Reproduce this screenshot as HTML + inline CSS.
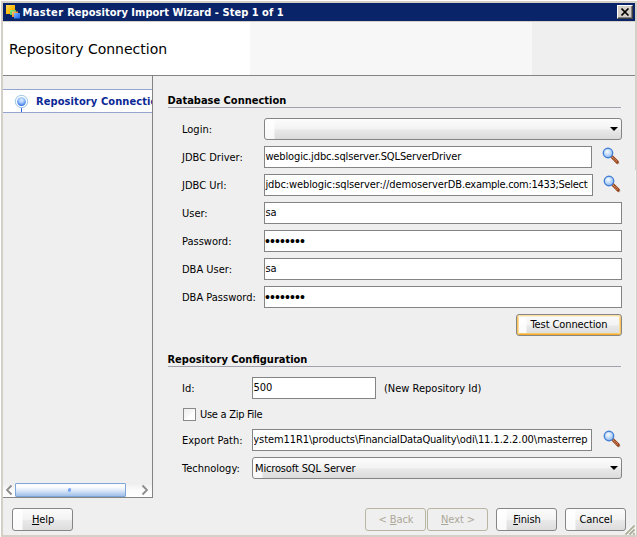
<!DOCTYPE html>
<html>
<head>
<meta charset="utf-8">
<title>Master Repository Import Wizard - Step 1 of 1</title>
<style>
html,body{margin:0;padding:0;}
body{width:637px;height:537px;overflow:hidden;background:#D4D0C8;position:relative;
 font-family:"DejaVu Sans Condensed","Liberation Sans",sans-serif;font-size:11px;color:#000;}
.abs{position:absolute;}
#win{position:absolute;left:0;top:0;width:637px;height:537px;background:#D4D0C8;overflow:hidden;}
#edgeL{left:0;top:0;width:1px;height:537px;background:#fff;}
#edgeT{left:0;top:0;width:637px;height:1px;background:#fff;}
#title{left:3px;top:3px;width:632px;height:18px;background:#0A246A;}
#title .t{left:19.5px;top:3px;letter-spacing:0.03px;color:#fff;font-weight:bold;white-space:pre;line-height:13px;}
#closeb{left:614px;top:2px;width:16px;height:14px;background:#D4D0C8;box-sizing:border-box;
 border-top:1px solid #fff;border-left:1px solid #fff;border-right:1px solid #404040;border-bottom:1px solid #404040;}
#closeb:after{content:"";position:absolute;left:0;top:0;right:0;bottom:0;border-right:1px solid #808080;border-bottom:1px solid #808080;}
#content{left:3px;top:22px;width:632px;height:513px;background:#EFEFEF;}
#hdrW{left:0;top:0;width:247px;height:53px;background:#fff;}
#hdrG{left:247px;top:0;width:282px;height:53px;background:#F7F7F7;}
#hdrLine{left:0;top:53px;width:632px;height:1px;background:#848484;}
#hdrTxt{left:6px;top:18px;font-family:"DejaVu Sans","Liberation Sans",sans-serif;font-size:14px;line-height:18px;white-space:pre;}
#vline{left:149px;top:54px;width:1px;height:422px;background:#848484;}
#navband{left:0;top:67px;width:149px;height:22px;background:#fff;border-top:1px solid #94A6CE;border-bottom:1px solid #94A6CE;overflow:hidden;}
#navtxt{left:33px;top:5px;font-weight:bold;color:#0A2896;letter-spacing:0.1px;white-space:pre;line-height:13px;}
.lbl{position:absolute;white-space:pre;line-height:13px;}
.sec{position:absolute;font-weight:bold;white-space:pre;line-height:13px;}
.sline{position:absolute;height:1px;background:#A2A2AE;border-right:1px solid #FBFBFB;}
.tf{position:absolute;box-sizing:border-box;height:22px;background:#fff;border:1px solid #848484;overflow:hidden;white-space:pre;line-height:20px;padding-left:0.4px;}
.tf.pw{font-family:"Liberation Sans",sans-serif;font-size:14px;letter-spacing:0.1px;padding-left:0;}
.combo{position:absolute;box-sizing:border-box;height:22px;border:1px solid #848484;border-radius:3px;background:linear-gradient(to right,rgba(255,255,255,.8) 0,rgba(255,255,255,.8) 9px,rgba(255,255,255,0) 10px),linear-gradient(#FCFCFC 0%,#F3F3F3 50%,#E9E9E9 54%,#DBDBDB 100%);white-space:pre;line-height:22px;padding-left:4px;}
.combo:after{content:"";position:absolute;right:3px;top:8px;border-left:4px solid transparent;border-right:4px solid transparent;border-top:4px solid #000;}
.btn{position:absolute;box-sizing:border-box;height:23px;border:1px solid #868686;border-radius:3px;padding-left:1px;
 background:linear-gradient(to right,rgba(255,255,255,.85) 0,rgba(255,255,255,.85) 9px,rgba(255,255,255,0) 10px),linear-gradient(#FBFBFB 0%,#F3F3F3 50%,#E9E9E9 54%,#DDDDDD 100%);
 text-align:center;line-height:22px;white-space:pre;letter-spacing:-0.1px;}
.btn.dis{color:#ACA899;border-color:#B8B6A2;background:#EFEFEF;}
.btn.foc{height:22px;line-height:20px;padding-left:0;box-shadow:inset 0 1px 0 0 #FBDFA4,inset 1px 0 0 0 #F9C460,inset -1px 0 0 0 #F9C460,inset 0 -1px 0 0 #F2AC34,inset 0 2px 0 0 #FDF0D0,inset 2px 0 0 0 #FCDC98,inset -2px 0 0 0 #FCDC98,inset 0 -2px 0 0 #F8C868;}
u{text-decoration:underline;}
</style>
</head>
<body>
<div id="win">
 <div class="abs" id="edgeT"></div><div class="abs" id="edgeL"></div>
 <div class="abs" style="left:635px;top:170px;width:1px;height:365px;background:#F4F4F2"></div>
 <div class="abs" id="title">
  <svg class="abs" style="left:2px;top:1px" width="16" height="16" viewBox="0 0 16 16">
   <defs>
    <linearGradient id="go" x1="0" y1="0" x2="1" y2="1"><stop offset="0" stop-color="#FFD860"/><stop offset="0.5" stop-color="#FFC010"/><stop offset="1" stop-color="#FF9800"/></linearGradient>
    <linearGradient id="gg" x1="0" y1="0" x2="1" y2="1"><stop offset="0" stop-color="#90F080"/><stop offset="1" stop-color="#30B030"/></linearGradient>
    <linearGradient id="gr" x1="0" y1="0" x2="1" y2="1"><stop offset="0" stop-color="#FFC890"/><stop offset="0.5" stop-color="#F89030"/><stop offset="1" stop-color="#F07810"/></linearGradient>
    <linearGradient id="gb" x1="0" y1="0" x2="1" y2="1"><stop offset="0" stop-color="#80B8FF"/><stop offset="1" stop-color="#1060F0"/></linearGradient>
   </defs>
   <rect x="1" y="1" width="9" height="9" fill="url(#go)"/>
   <rect x="5" y="6" width="6" height="5" fill="url(#gg)"/>
   <rect x="7" y="7.5" width="6" height="5.5" fill="url(#gr)"/>
   <rect x="9" y="9" width="6" height="5.5" fill="url(#gb)"/>
  </svg>
  <div class="abs t"><span style="letter-spacing:0.36px">Master </span>Repository Import Wizard - Step 1 of 1</div>
  <div class="abs" id="closeb">
   <svg class="abs" style="left:3px;top:2px" width="9" height="8" viewBox="0 0 9 8"><path d="M0.5 0.5 L7.5 7.5 M7.5 0.5 L0.5 7.5" stroke="#000" stroke-width="1.6" fill="none"/></svg>
  </div>
 </div>
<svg width="0" height="0" style="position:absolute">
  <defs>
   <radialGradient id="lens" cx="0.42" cy="0.36" r="0.7"><stop offset="0" stop-color="#F8FCFF"/><stop offset="0.5" stop-color="#C0DAF8"/><stop offset="1" stop-color="#80B2EE"/></radialGradient>
   <g id="mag">
    <line x1="11.4" y1="11.2" x2="16.9" y2="16.9" stroke="#A8A8A8" stroke-width="3" stroke-linecap="round" opacity="0.55"/>
    <line x1="10.6" y1="10.4" x2="16.2" y2="16" stroke="#9A4216" stroke-width="3.2" stroke-linecap="round"/>
    <line x1="11.2" y1="11" x2="16" y2="15.8" stroke="#DDAA88" stroke-width="1.8" stroke-dasharray="0.8 1"/>
    <circle cx="7" cy="7" r="4.7" fill="url(#lens)" stroke="#4480D6" stroke-width="1.4"/>
   </g>
  </defs>
 </svg>
 <div class="abs" id="content">
  <div class="abs" id="hdrW"></div><div class="abs" id="hdrG"></div><div class="abs" id="hdrLine"></div>
  <div class="abs" id="hdrTxt">Repository Connection</div>
  <div class="abs" id="vline"></div>
  <div class="abs" id="sbtrack" style="left:0;top:461px;width:149px;height:14px;background:linear-gradient(#EDEDED,#FBFBFB 50%,#fff)"></div>
  <div class="abs" id="sbthumb" style="left:12px;top:461px;width:111px;height:14px;box-sizing:border-box;border:1px solid #7FA6D8;border-radius:1px;background:linear-gradient(#F8FBFF,#FFFFFF 20%,#DCE8F8 55%,#A4C2EA 95%)"></div>
  <div class="abs" style="left:65px;top:466px;width:3px;height:4px;border-radius:2px;background:#7AA6F2;transform:rotate(25deg)"></div>
  <svg class="abs" style="left:2px;top:462px" width="9" height="12" viewBox="0 0 9 12"><path d="M6.5 1.5 L2 6 L6.5 10.5" stroke="#8C8C8C" stroke-width="1.8" fill="none"/></svg>
  <svg class="abs" style="left:137px;top:462px" width="9" height="12" viewBox="0 0 9 12"><path d="M2.5 1.5 L7 6 L2.5 10.5" stroke="#8C8C8C" stroke-width="1.8" fill="none"/></svg>
  <div class="abs" id="hline2" style="left:0;top:475px;width:150px;height:1px;background:#848484"></div>
  <div class="abs" id="navband">
   <svg class="abs" style="left:11px;top:4px" width="16" height="19" viewBox="0 0 16 19">
    <defs><radialGradient id="nb" cx="0.5" cy="0.35" r="0.7"><stop offset="0" stop-color="#E4F0FF"/><stop offset="0.45" stop-color="#9CC4FA"/><stop offset="0.8" stop-color="#4A84EE"/><stop offset="1" stop-color="#1C48D0"/></radialGradient></defs>
    <line x1="7.5" y1="13" x2="7.5" y2="19" stroke="#3562DC" stroke-width="1"/>
    <circle cx="7.5" cy="7.5" r="6.2" fill="#FAFDFF" stroke="#9CC6E2" stroke-width="1"/>
    <circle cx="7.5" cy="7.6" r="4.4" fill="url(#nb)"/>
   </svg>
   <div class="abs" id="navtxt">Repository Connection</div>
  </div>

  <div class="sec" style="left:164.5px;top:72px">Database Connection</div>
  <div class="sline" style="left:165px;top:85px;width:453px"></div>

  <div class="lbl" style="left:179px;top:101px">Login:</div>
  <div class="combo" style="left:261px;top:96px;width:358px"></div>

  <div class="lbl" style="left:179px;top:129px">JDBC Driver:</div>
  <div class="tf" style="left:261px;top:124px;width:328px;letter-spacing:-0.13px">weblogic.jdbc.sqlserver.SQLServerDriver</div>

  <svg class="abs" style="left:598px;top:124px" width="20" height="20" viewBox="0 0 20 20"><use href="#mag"/></svg>
  <div class="lbl" style="left:179px;top:157px">JDBC Url:</div>
  <div class="tf" style="left:261px;top:152px;width:329px;letter-spacing:-0.1px"><div style="overflow:hidden;width:322.3px;height:20px">jdbc:weblogic:sqlserver://demoserverDB<span style="letter-spacing:-0.29px">.example.com:1433;SelectMethod=cursor</span></div></div>

  <svg class="abs" style="left:599px;top:152px" width="20" height="20" viewBox="0 0 20 20"><use href="#mag"/></svg>
  <div class="lbl" style="left:179px;top:185px">User:</div>
  <div class="tf" style="left:261px;top:180px;width:358px">sa</div>

  <div class="lbl" style="left:179px;top:213px">Password:</div>
  <div class="tf pw" style="left:261px;top:208px;width:358px">••••••••</div>

  <div class="lbl" style="left:179px;top:241px">DBA User:</div>
  <div class="tf" style="left:261px;top:236px;width:358px">sa</div>

  <div class="lbl" style="left:179px;top:269px">DBA Password:</div>
  <div class="tf pw" style="left:261px;top:264px;width:358px">••••••••</div>

  <div class="btn foc" style="left:513px;top:292px;width:106px">Test Connection</div>

  <div class="sec" style="left:164.5px;top:331px">Repository Configuration</div>
  <div class="sline" style="left:165px;top:344px;width:453px"></div>

  <div class="lbl" style="left:179px;top:360px">Id:</div>
  <div class="tf" style="left:249px;top:355px;width:124px">500</div>
  <div class="lbl" style="left:381px;top:360px">(New Repository Id)</div>

  <div class="abs" style="left:180px;top:386px;width:13px;height:13px;box-sizing:border-box;border:1px solid #8A8A8A;background:linear-gradient(135deg,#EFEFEF 0%,#F6F6F6 45%,#FFFFFF 60%)"></div>
  <div class="lbl" style="left:197px;top:386px;letter-spacing:-0.28px">Use a Zip File</div>

  <div class="lbl" style="left:179px;top:412px">Export Path:</div>
  <div class="tf" style="left:249px;top:407px;width:340px;padding-left:0"><div style="overflow:hidden;margin-left:1px;height:20px"><span style="float:right;padding-right:3.5px;letter-spacing:-0.07px">C:\Oracle\Middleware\EPMSystem11R1\products\<span style="letter-spacing:-0.2px">FinancialDataQuality</span><span style="letter-spacing:-0.06px">\odi\11.1.2.2.00\masterrep</span></span></div></div>

  <svg class="abs" style="left:599px;top:407px" width="20" height="20" viewBox="0 0 20 20"><use href="#mag"/></svg>
  <div class="lbl" style="left:179px;top:440px">Technology:</div>
  <div class="combo" style="left:249px;top:435px;width:370px;padding-left:2px;letter-spacing:-0.15px">Microsoft SQL Server</div>

  <div class="btn" style="left:9px;top:486px;width:61px"><u>H</u>elp</div>
  <div class="btn dis" style="left:362px;top:486px;width:61px">&lt; <u>B</u>ack</div>
  <div class="btn dis" style="left:424px;top:486px;width:61px"><u>N</u>ext &gt;</div>
  <div class="btn" style="left:493px;top:486px;width:61px"><u>F</u>inish</div>
  <div class="btn" style="left:562px;top:486px;width:61px">Cancel</div>
  <svg class="abs" style="left:622px;top:503px" width="10" height="10" viewBox="0 0 10 10">
   <path d="M0 8.5 L8.5 0 M4 8.5 L8.5 4 M7.6 8.5 L8.5 7.6" stroke="#FFFFFF" stroke-width="1.4" fill="none"/>
   <path d="M0.5 9.5 L9.5 0.5 M4.5 9.5 L9.5 4.5 M8.2 9.5 L9.5 8.2" stroke="#ACAC98" stroke-width="1.8" fill="none"/>
  </svg>
 </div>
</div>
</body>
</html>
